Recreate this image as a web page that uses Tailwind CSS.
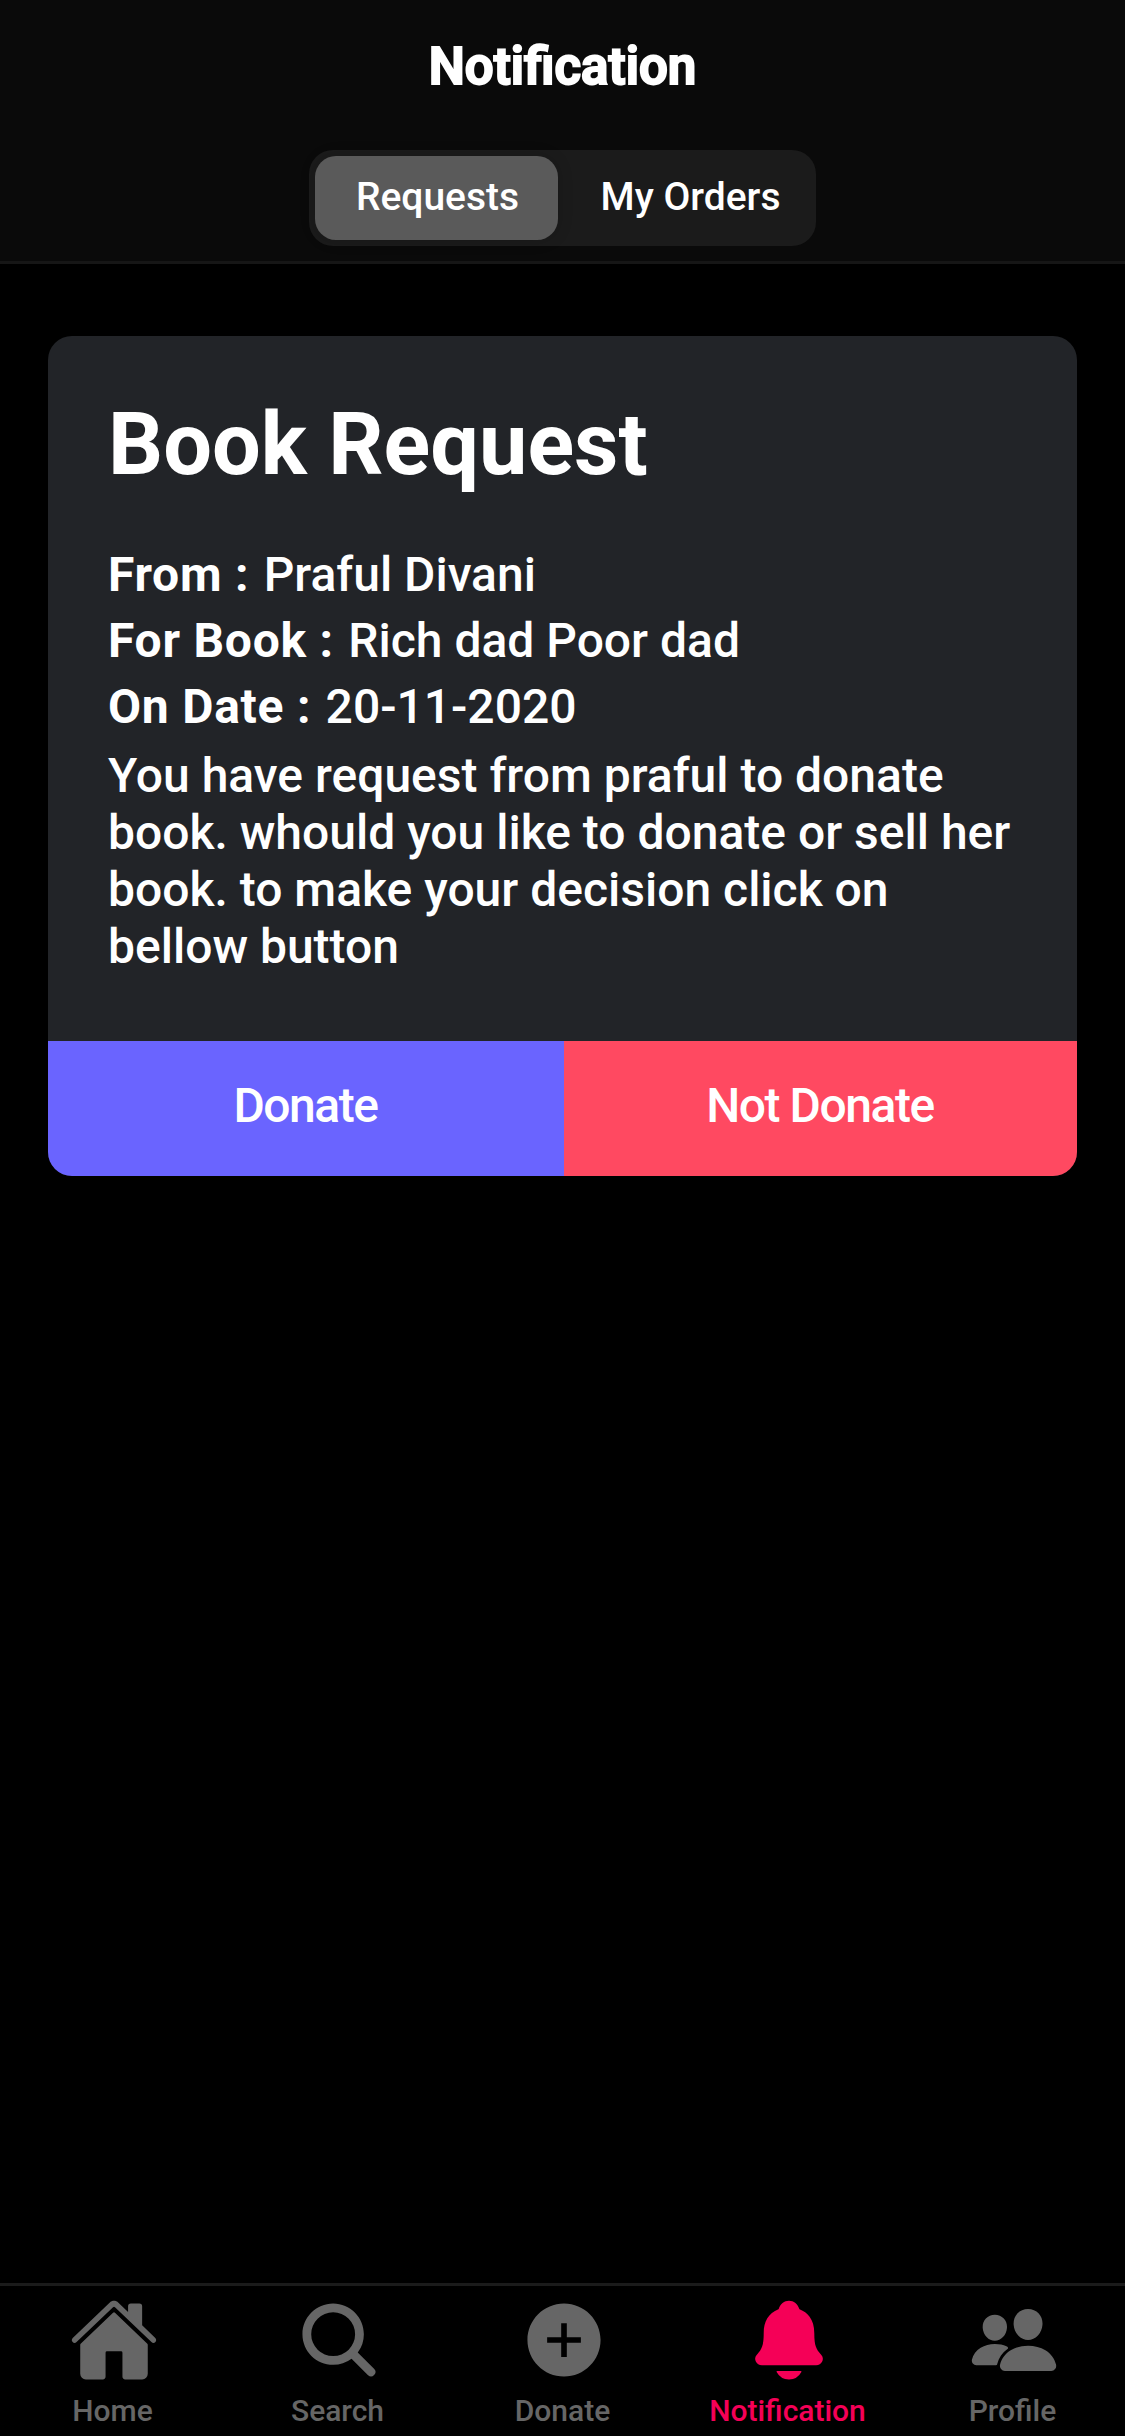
<!DOCTYPE html>
<html lang="en">
<head>
<meta charset="utf-8">
<title>Notification</title>
<script src="https://cdn.jsdelivr.net/npm/@tailwindcss/browser@4"></script>
</head>
<body class="bg-black">
<div class="flex h-[2436px] w-[1125px] flex-col overflow-hidden bg-black font-['Roboto',sans-serif] text-white">
  <header class="flex h-[264px] flex-col items-center border-b-[3px] border-[#161616] bg-[#0a0a0a]">
    <h1 class="mt-[37px] text-[51px] leading-[60px] font-semibold [-webkit-text-stroke:2px_#fff]">Notification</h1>
    <div class="mt-[53px] flex h-24 w-[507px] rounded-[24px] bg-[#1b1b1b] p-1.5 text-[39px] font-medium">
      <button class="h-[84px] w-[243px] rounded-[21px] bg-[#5a5a5a] pb-[2px] pl-[2px] text-center shadow-[0_0_16px_rgba(0,0,0,0.16)]">Requests</button>
      <button class="h-[84px] flex-1 pb-[2px] pl-[13px] text-center">My Orders</button>
    </div>
  </header>

  <main class="flex-1 px-12 pt-[72px]">
    <section class="overflow-hidden rounded-[24px] bg-[#222428]">
      <div class="px-[60px] pt-[60px] pb-[66px]">
        <h2 class="text-[86.4px] leading-[98px] font-bold">Book Request</h2>
        <div class="mt-12 text-[48px] leading-[66px] font-medium">
          <p><b class="mr-[2.5px] font-bold tracking-[0.75px]">From :</b> Praful Divani</p>
          <p><b class="mr-[2.5px] font-bold tracking-[0.75px]">For Book :</b> Rich dad Poor dad</p>
          <p><b class="mr-[2.5px] font-bold tracking-[0.75px]">On Date :</b> 20-11-2020</p>
        </div>
        <p class="mt-[7px] text-[48px] leading-[57px] font-medium">You have request from praful to donate<br>book. whould you like to donate or sell her<br>book. to make your decision click on<br>bellow button</p>
      </div>
      <div class="flex h-[135px] text-[48px] font-medium tracking-[-0.03em]">
        <button class="w-[516px] bg-[#6a64ff] pr-px pb-1.5">Donate</button>
        <button class="flex-1 bg-[#ff4961] pr-px pb-1.5">Not Donate</button>
      </div>
    </section>
  </main>

  <nav class="grid h-[153px] grid-cols-5 border-t-[3px] border-[#1b1b1b] pt-[9px] text-[30px] leading-9 font-medium text-[#666]">
    <a class="flex flex-col items-center gap-2">
      <svg class="ml-[3px] size-[90px]" viewBox="0 0 512 512" fill="currentColor"><path d="M261.56 101.28a8 8 0 00-11.06 0L66.4 277.15a8 8 0 00-2.47 5.79L63.9 448a32 32 0 0032 32H192a16 16 0 0016-16V328a8 8 0 018-8h80a8 8 0 018 8v136a16 16 0 0016 16h96.06a32 32 0 0032-32V282.94a8 8 0 00-2.47-5.79z"/><path d="M490.91 244.15l-74.8-71.56V64a16 16 0 00-16-16h-48a16 16 0 00-16 16v32l-57.92-55.38C272.77 35.14 264.71 32 256 32c-8.68 0-16.72 3.14-22.14 8.63l-212.7 203.5c-6.22 6-7 15.87-1.34 22.37A16 16 0 0043 267.56L250.5 69.28a8 8 0 0111.06 0l207.52 198.28a16 16 0 0022.59-.44c6.14-6.36 5.63-16.86-.76-22.97z"/></svg>
      <span>Home</span>
    </a>
    <a class="flex flex-col items-center gap-2">
      <svg class="ml-[3px] size-[90px]" viewBox="0 0 512 512" fill="currentColor"><path d="M456.69 421.39L362.6 327.3a173.81 173.81 0 0034.84-104.58C397.44 126.38 319.06 48 222.72 48S48 126.38 48 222.72s78.38 174.72 174.72 174.72A173.81 173.81 0 00327.3 362.6l94.09 94.09a25 25 0 0035.3-35.3zM97.92 222.72a124.8 124.8 0 11124.8 124.8 124.95 124.95 0 01-124.8-124.8z"/></svg>
      <span>Search</span>
    </a>
    <a class="flex flex-col items-center gap-2">
      <svg class="ml-[3px] size-[90px]" viewBox="0 0 512 512" fill="currentColor"><path d="M256 48C141.31 48 48 141.31 48 256s93.31 208 208 208 208-93.31 208-208S370.69 48 256 48zm96 224h-80v80h-32v-80h-80v-32h80v-80h32v80h80z"/></svg>
      <span>Donate</span>
    </a>
    <a class="flex flex-col items-center gap-2 text-[#f50057]">
      <svg class="ml-[3px] size-[90px]" viewBox="0 0 512 512" fill="currentColor"><path d="M440.08 341.31c-1.66-2-3.29-4-4.89-5.93-22-26.61-35.31-42.67-35.31-118 0-39-9.33-71-27.72-95-13.56-17.73-31.89-31.18-56.05-41.12a3 3 0 01-.82-.67C306.6 51.49 282.82 32 256 32s-50.59 19.49-59.28 48.56a3.13 3.13 0 01-.81.65c-56.38 23.21-83.78 67.74-83.78 136.14 0 75.36-13.29 91.42-35.31 118-1.6 1.93-3.23 3.89-4.89 5.93a35.16 35.16 0 00-4.65 37.62c6.17 13 19.32 21.07 34.33 21.07H410.5c14.94 0 28-8.06 34.19-21a35.17 35.17 0 00-4.61-37.66zM256 480a80.06 80.06 0 0070.44-42.13 4 4 0 00-3.54-5.87H189.12a4 4 0 00-3.55 5.87A80.06 80.06 0 00256 480z"/></svg>
      <span>Notification</span>
    </a>
    <a class="flex flex-col items-center gap-2">
      <svg class="ml-[3px] size-[90px]" viewBox="0 0 512 512" fill="currentColor"><path d="M336 256c-20.56 0-40.44-9.18-56-25.84-15.13-16.25-24.37-37.92-26-61-1.74-24.62 5.77-47.26 21.14-63.76S312 80 336 80c23.83 0 45.38 9.06 60.7 25.52 15.47 16.62 23 39.22 21.26 63.63-1.67 23.11-10.9 44.77-26 61C376.44 246.82 356.57 256 336 256zM467.83 432H204.18a27.71 27.71 0 01-22-10.67 30.22 30.22 0 01-5.26-25.79c8.42-33.81 29.28-61.85 60.32-81.08C264.79 297.4 299.86 288 336 288c36.85 0 71 9 98.71 26.05 31.11 19.13 52 47.33 60.38 81.55a30.27 30.27 0 01-5.32 25.78A27.68 27.68 0 01467.83 432zM147 260c-35.19 0-66.13-32.72-69-72.93-1.42-20.6 5-39.65 18-53.62 12.86-13.83 31-21.45 51-21.45s38 7.66 50.93 21.57c13.1 14.08 19.5 33.09 18 53.52-2.87 40.2-33.8 72.91-68.93 72.91zM212.66 291.45c-17.59-8.6-40.42-12.9-65.65-12.9-29.46 0-58.07 7.68-80.57 21.62-25.51 15.83-42.67 38.88-49.6 66.71a27.39 27.39 0 004.79 23.36A25.32 25.32 0 0041.72 400h111a8 8 0 007.87-6.57c.11-.63.25-1.26.41-1.88 8.48-34.06 28.35-62.84 57.71-83.82a8 8 0 00-.63-13.39c-1.57-.92-3.37-1.89-5.42-2.89z"/></svg>
      <span>Profile</span>
    </a>
  </nav>
</div>
</body>
</html>
